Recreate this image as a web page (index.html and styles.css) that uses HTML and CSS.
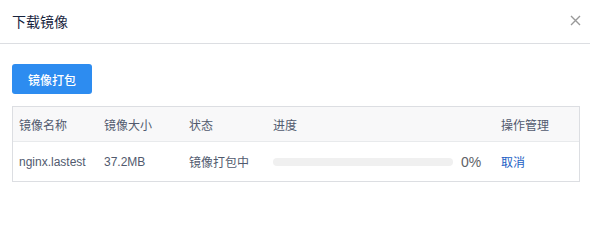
FILE: index.html
```html
<!DOCTYPE html>
<html lang="zh-CN">
<head>
<meta charset="utf-8">
<title>下载镜像</title>
<link rel="stylesheet" href="styles.css">
</head>
<body>
<div class="modal">
  <div class="modal-header">
    <span class="modal-title">下载镜像</span>
    <span class="close" aria-label="关闭">
      <svg width="11" height="11" viewBox="0 0 11 11"><path d="M1 1L10 10M10 1L1 10" stroke="#999" stroke-width="1.4" fill="none"/></svg>
    </span>
  </div>
  <div class="modal-body">
    <button class="btn-primary">镜像打包</button>
    <div class="table">
      <div class="row head">
        <div class="cell">镜像名称</div>
        <div class="cell">镜像大小</div>
        <div class="cell">状态</div>
        <div class="cell">进度</div>
        <div class="cell">操作管理</div>
      </div>
      <div class="row body">
        <div class="cell">nginx.lastest</div>
        <div class="cell">37.2MB</div>
        <div class="cell">镜像打包中</div>
        <div class="cell progress-cell">
          <div class="progress"><div class="progress-bar" style="width:0%"></div></div>
          <span class="percent">0%</span>
        </div>
        <div class="cell"><a class="link" href="#">取消</a></div>
      </div>
    </div>
  </div>
</div>
</body>
</html>
```
FILE: styles.css
```css
* { box-sizing: border-box; }
html, body { margin: 0; padding: 0; background: #fff; }
body {
  font-family: "Liberation Sans", "Noto Sans CJK SC", sans-serif;
  font-size: 12px;
  color: #515a6e;
}
.modal { width: 590px; }
.modal-header {
  height: 44px;
  border-bottom: 1px solid #dcdee2;
  display: flex;
  align-items: center;
  justify-content: space-between;
  padding: 0 9px 0 12px;
}
.modal-title {
  font-size: 14px;
  color: #17233d;
  line-height: 1;
  margin-top: 1px;
}
.close { display: flex; margin-top: -3px; }
.modal-body { padding: 20px 10px 0 12px; }
.btn-primary {
  display: block;
  width: 80px;
  height: 30px;
  border: none;
  border-radius: 3px;
  background: #2d8cf0;
  color: #fff;
  font-family: inherit;
  font-size: 12px;
  font-weight: 500;
  padding: 0;
  cursor: pointer;
}
.table {
  margin-top: 12px;
  width: 568px;
  border: 1px solid #dcdee2;
}
.row {
  display: grid;
  grid-template-columns: 85px 85px 84px 228px 84px;
  align-items: center;
}
.row.head {
  height: 35px;
  background: #f8f8f9;
  border-bottom: 1px solid #e8eaec;
  color: #515a6e;
}
.row.body { height: 39px; }
.cell { padding-left: 6px; white-space: nowrap; }
.progress-cell { display: flex; align-items: center; }
.progress {
  width: 180px;
  height: 8px;
  border-radius: 4px;
  background: #f0f0f0;
  overflow: hidden;
}
.progress-bar { height: 100%; background: #2d8cf0; }
.percent { margin-left: 8px; font-size: 14px; color: #606266; }
.link { color: #2160c4; text-decoration: none; }
```
